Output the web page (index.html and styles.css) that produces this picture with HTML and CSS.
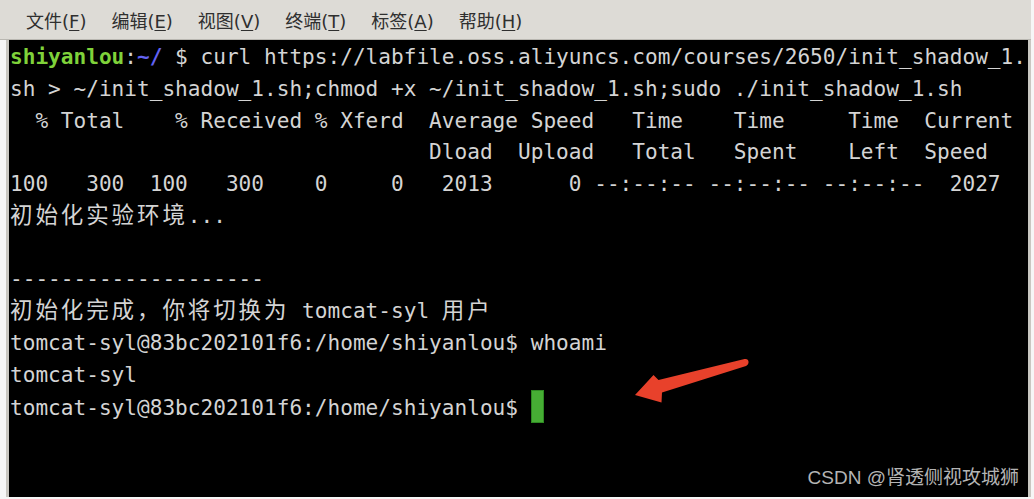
FILE: index.html
```html
<!DOCTYPE html>
<html lang="zh-CN">
<head>
    <meta charset="UTF-8">
    <title>终端 - shiyanlou</title>
    <link rel="stylesheet" href="styles.css">
</head>
<body>
    <div class="window">
        <div class="menubar">
            <span class="menu-item">文件(<u>F</u>)</span>
            <span class="menu-item">编辑(<u>E</u>)</span>
            <span class="menu-item">视图(<u>V</u>)</span>
            <span class="menu-item">终端(<u>T</u>)</span>
            <span class="menu-item">标签(<u>A</u>)</span>
            <span class="menu-item">帮助(<u>H</u>)</span>
        </div>

        <div class="screen">
            <div class="line"><span class="user">shiyanlou</span>:<span class="path">~/</span> $ curl https://labfile.oss.aliyuncs.com/courses/2650/init_shadow_1.</div>
            <div class="line">sh &gt; ~/init_shadow_1.sh;chmod +x ~/init_shadow_1.sh;sudo ./init_shadow_1.sh</div>
            <div class="line">  % Total    % Received % Xferd  Average Speed   Time    Time     Time  Current</div>
            <div class="line">                                 Dload  Upload   Total   Spent    Left  Speed</div>
            <div class="line">100   300  100   300    0     0   2013      0 --:--:-- --:--:-- --:--:--  2027</div>
            <div class="line"><span class="wide">初始化实验环境</span>...</div>
            <div class="line"></div>
            <div class="line">--------------------</div>
            <div class="line"><span class="wide">初始化完成，你将切换为</span> tomcat-syl <span class="wide">用户</span></div>
            <div class="line">tomcat-syl@83bc202101f6:/home/shiyanlou$ whoami</div>
            <div class="line">tomcat-syl</div>
            <div class="line">tomcat-syl@83bc202101f6:/home/shiyanlou$ <span class="cursor"></span></div>

            <svg class="arrow" viewBox="9 41 1019 456" width="1019" height="456">
                <path d="M635 396 L653.5 376 L658.5 381 L744.5 360 Q749 359.5 748.5 364 Q748 366 746 367 L662 393.5 L661.5 403.5 Z" fill="#e8412b"/>
            </svg>

            <div class="watermark">CSDN @肾透侧视攻城狮</div>
        </div>
    </div>
</body>
</html>
```

FILE: styles.css
```css
body {
    margin: 0;
    background-color: #f6f6f6;
    overflow: hidden;
}
.window {
    width: 1031px;
    height: 497px;
    display: flex;
    flex-direction: column;
}
.menubar {
    height: 40px;
    display: flex;
    align-items: center;
    gap: 25px;
    padding-left: 26px;
    background-color: #dddbd6;
    border-bottom: 1px solid #b9b7b1;
    box-sizing: border-box;
    font-family: 'DejaVu Sans', 'Noto Sans CJK SC', sans-serif;
    font-size: 18px;
    color: #2f2f2f;
}
.menu-item u {
    text-decoration-thickness: 1px;
    text-underline-offset: 2px;
}
.screen {
    position: relative;
    flex: 1;
    margin-left: 6px;
    padding: 1px 0 0 1px;
    background-color: #000;
    border-left: 3px solid #c9c7c1;
    border-right: 3px solid #c9c7c1;
    font-family: 'DejaVu Sans Mono', 'Noto Sans CJK SC', monospace;
    font-size: 21.1px;
    color: #d4d4d4;
}
.line {
    height: 31.75px;
    line-height: 31.75px;
    white-space: pre;
}
.wide {
    font-size: 22.5px;
    letter-spacing: 2.9px;
}
.user {
    color: #7fd23a;
    font-weight: bold;
}
.path {
    color: #6262f2;
    font-weight: bold;
}
.cursor {
    display: inline-block;
    width: 11px;
    height: 31px;
    vertical-align: -8px;
    background-color: #46ad34;
    border: 1px solid #2e8a22;
}
.arrow {
    position: absolute;
    left: 0;
    top: 0;
}
.watermark {
    position: absolute;
    right: 9px;
    bottom: 8px;
    font-family: 'Liberation Sans', 'Noto Sans CJK SC', sans-serif;
    font-size: 19px;
    color: #b4b4b4;
}
```
